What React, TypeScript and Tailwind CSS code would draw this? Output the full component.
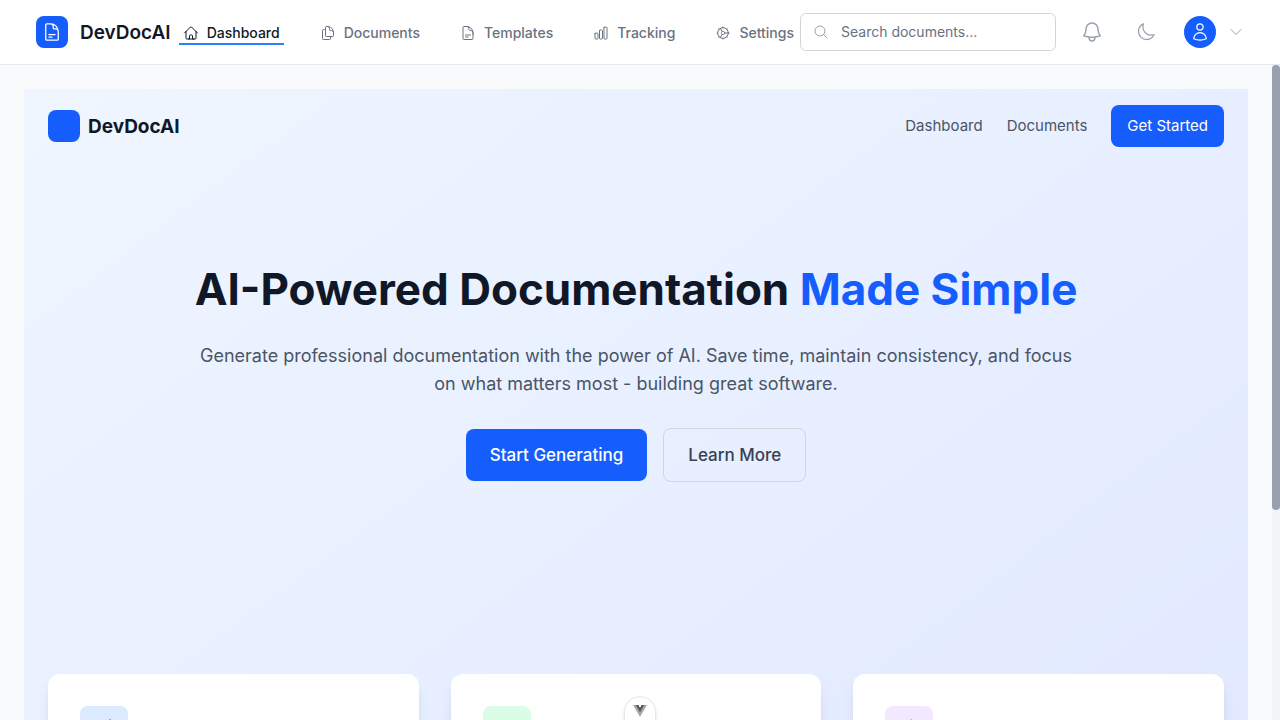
import { useState, type UIEvent, type ReactNode } from "react";
import {
  HiOutlineBell,
  HiOutlineBolt,
  HiOutlineChartBar,
  HiOutlineCheckCircle,
  HiOutlineChevronDown,
  HiOutlineDocumentDuplicate,
  HiOutlineDocumentText,
  HiOutlineHome,
  HiOutlineMagnifyingGlass,
  HiOutlineMoon,
  HiOutlineUser,
} from "react-icons/hi2";

function CogIcon({ className }: { className?: string }) {
  return (
    <svg viewBox="0 0 24 24" fill="none" stroke="currentColor" strokeWidth="1.5" strokeLinecap="round" className={className}>
      <circle cx="12" cy="12" r="8" />
      <path d="M12 3.2v.6M12 20.2v.6M3.2 12h.6M20.2 12h.6M5.8 5.8l.4.4M17.8 17.8l.4.4M5.8 18.2l.4-.4M17.8 6.2l.4-.4" strokeWidth="1.8" />
      <circle cx="12" cy="12" r="2.6" strokeWidth="1.1" />
      <path d="M14.6 12H20M10.7 9.7 8 5.1M10.7 14.3 8 18.9" />
    </svg>
  );
}

function SparkleIcon({ className }: { className?: string }) {
  return (
    <svg viewBox="0 0 24 24" fill="none" stroke="currentColor" strokeWidth="1.5" strokeLinejoin="round" className={className}>
      <path d="M18 2l1 3.5 3.5 1-3.5 1-1 3.5-1-3.5-3.5-1 3.5-1z" />
      <path d="M9 7l1.6 5.4L16 14l-5.4 1.6L9 21l-1.6-5.4L2 14l5.400-1.600z" />
    </svg>
  );
}

const navItems = [
  { label: "Dashboard", icon: HiOutlineHome, active: true },
  { label: "Documents", icon: HiOutlineDocumentDuplicate, active: false },
  { label: "Templates", icon: HiOutlineDocumentText, active: false },
  { label: "Tracking", icon: HiOutlineChartBar, active: false },
  { label: "Settings", icon: CogIcon, active: false },
];

function Header() {
  return (
    <header className="flex shrink-0 border-b border-gray-200 bg-white px-9">
      <div className="flex h-16 w-full items-center justify-between">
        <div className="flex items-center gap-2">
          <a href="#home" className="flex items-center gap-3">
            <span className="flex size-8 items-center justify-center rounded-lg bg-[#155dfc] text-white">
              <HiOutlineDocumentText className="size-5" />
            </span>
            <span className="pt-0.5 text-[19px] leading-7 font-semibold text-gray-900">DevDocAI</span>
          </a>
          <nav aria-label="Main" className="flex items-center gap-8">
            {navItems.map(({ label, icon: Icon, active }) => (
              <a
                key={label}
                href={"#" + label.toLowerCase()}
                aria-current={active ? "page" : undefined}
                className={
                  active
                    ? "flex items-center gap-2 border-b-2 border-[#2b7fff] px-1 pt-1 text-sm font-medium text-gray-900"
                    : "flex items-center gap-2 border-b-2 border-transparent px-1 pt-1 text-sm font-medium text-gray-500"
                }
              >
                <Icon className="size-4" />
                {label}
              </a>
            ))}
          </nav>
        </div>
        <div className="flex items-center">
          <label className="flex h-[38px] w-64 items-center gap-3 rounded-md border border-gray-300 bg-white px-3">
            <HiOutlineMagnifyingGlass className="size-4 shrink-0 text-gray-400" />
            <input
              type="search"
              aria-label="Search documents"
              placeholder="Search documents..."
              className="w-full min-w-0 text-sm text-gray-900 outline-none placeholder:text-gray-500"
            />
          </label>
          <div className="ml-4 flex items-center gap-5 text-gray-400">
            <div className="flex items-center gap-4">
              <button type="button" aria-label="Notifications" className="p-2">
                <HiOutlineBell className="size-6" />
              </button>
              <button type="button" aria-label="Dark mode" className="p-2">
                <HiOutlineMoon className="size-5" />
              </button>
            </div>
            <button type="button" aria-label="Account" className="flex items-center gap-3">
              <span className="flex size-8 items-center justify-center rounded-full bg-[#155dfc] text-white">
                <HiOutlineUser className="size-5" />
              </span>
              <HiOutlineChevronDown className="size-4" />
            </button>
          </div>
        </div>
      </div>
    </header>
  );
}

function FeatureCard({ tint, children }: { tint: string; children: ReactNode }) {
  return (
    <article className="h-[309px] rounded-xl bg-white p-8 shadow-lg">
      <div className={"flex size-12 items-center justify-center rounded-lg " + tint}>{children}</div>
    </article>
  );
}

function Hero() {
  return (
    <div className="bg-linear-to-br from-blue-50 to-indigo-100 px-6 pb-6">
      <div className="flex items-center justify-between pt-4">
        <div className="flex items-center gap-2">
          <span className="size-8 rounded-lg bg-[#155dfc]" />
          <span className="pt-0.5 text-[19px] leading-7 font-bold text-gray-900">DevDocAI</span>
        </div>
        <div className="flex items-center gap-6 text-[15px] text-gray-600">
          <a href="#dashboard">Dashboard</a>
          <a href="#documents">Documents</a>
          <button type="button" className="rounded-lg bg-[#155dfc] px-4 py-2 leading-[26px] text-white">
            Get Started
          </button>
        </div>
      </div>
      <section className="mx-auto flex max-w-4xl flex-col items-center pt-[113px] pb-48 text-center">
        <h1 className="text-[44px] leading-[58px] font-bold whitespace-nowrap text-gray-900">
          AI-Powered Documentation <span className="text-[#155dfc]">Made Simple</span>
        </h1>
        <p className="mt-6 text-lg leading-7 text-gray-600">
          Generate professional documentation with the power of AI. Save time, maintain consistency, and focus on what
          matters most - building great software.
        </p>
        <div className="mt-[30px] flex items-center gap-4 text-[17px] leading-7 font-medium">
          <button type="button" className="rounded-lg bg-[#155dfc] px-6 py-3 text-white">
            Start Generating
          </button>
          <button type="button" className="rounded-lg border border-gray-300 px-6 py-3 text-gray-700">
            Learn More
          </button>
        </div>
      </section>
      <section className="grid grid-cols-3 gap-8">
        <FeatureCard tint="bg-blue-100 text-[#155dfc]">
          <SparkleIcon className="size-6" />
        </FeatureCard>
        <FeatureCard tint="bg-green-100 text-green-600">
          <HiOutlineCheckCircle className="size-6" />
        </FeatureCard>
        <FeatureCard tint="bg-purple-100 text-purple-600">
          <HiOutlineBolt className="size-6" />
        </FeatureCard>
      </section>
    </div>
  );
}

export default function App() {
  const [progress, setProgress] = useState(0);
  const onScroll = (e: UIEvent<HTMLElement>) => {
    const el = e.currentTarget;
    const range = el.scrollHeight - el.clientHeight;
    setProgress(range > 0 ? el.scrollTop / range : 0);
  };

  return (
    <div className="relative flex h-screen flex-col overflow-hidden bg-gray-50 font-['Inter',sans-serif]">
      <Header />
      <div className="flex min-h-0 flex-1">
        <main onScroll={onScroll} className="min-w-0 flex-1 overflow-y-auto p-6 [scrollbar-width:none]">
          <Hero />
        </main>
        <div aria-hidden="true" className="flex w-2 flex-col bg-gray-100">
          <div style={{ height: `${progress * 32}%` }} />
          <div className="h-[68%] rounded-full bg-gray-400" />
        </div>
      </div>
      <button
        type="button"
        aria-label="Developer tools"
        className="absolute -bottom-6 left-1/2 flex h-12 w-8 -translate-x-1/2 justify-center rounded-full border border-gray-200 bg-white pt-2 shadow-md"
      >
        <svg viewBox="0 0 14 12" className="h-3 w-3.5">
          <path d="M0 0h5.3L7 2.9 8.7 0H14L7 12z" fill="#aaa" />
          <path d="M2.8 0h2.5L7 2.9 8.7 0h2.5L7 7.2z" fill="#555" />
        </svg>
      </button>
    </div>
  );
}
